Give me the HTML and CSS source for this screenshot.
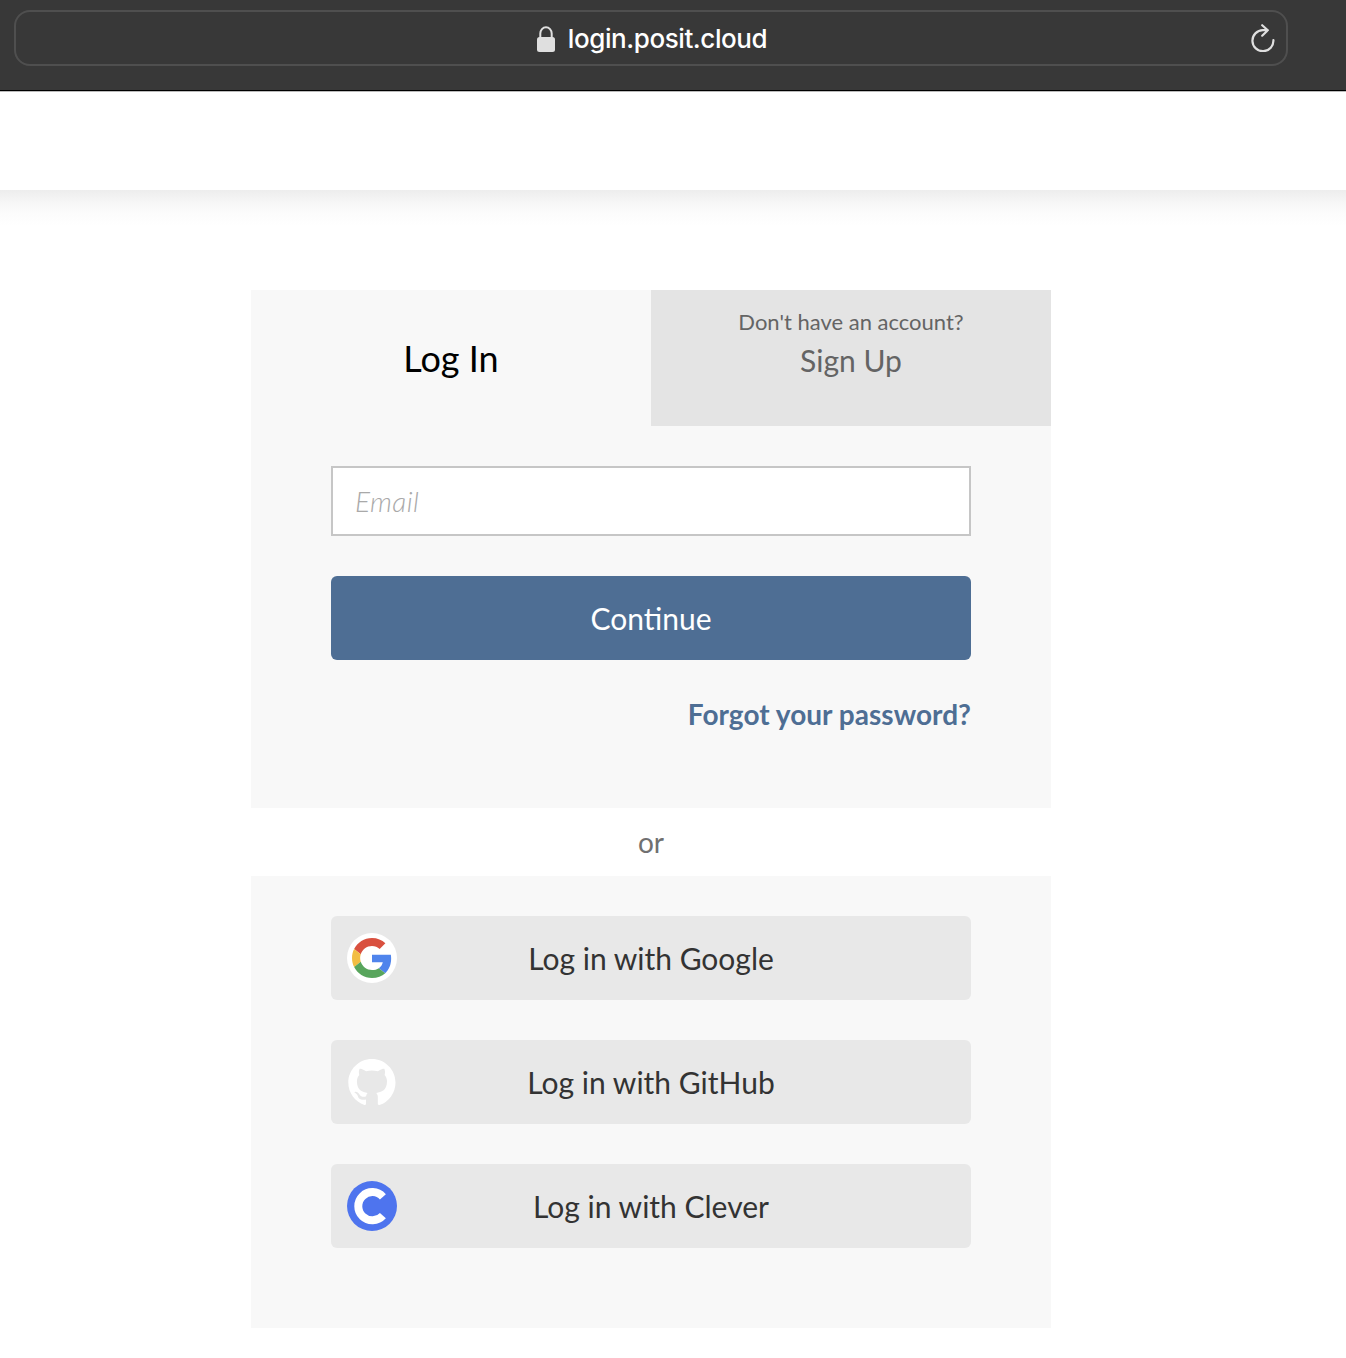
FILE: index.html
```html
<!DOCTYPE html>
<html lang="en">
<head>
<meta charset="utf-8">
<title>Log In</title>
<link rel="stylesheet" href="styles.css">
</head>
<body>
<div class="toolbar">
  <div class="address">
    <svg class="lock" width="18" height="26" viewBox="0 0 18 26"><path d="M3.3 12V7.5a5.7 6.2 0 0 1 11.4 0V12" fill="none" stroke="#dfdfdf" stroke-width="2"/><rect x="0" y="11" width="18" height="15" rx="2.5" fill="#dfdfdf"/></svg>
    <span class="url">login.posit.cloud</span>
    <svg class="reload" width="24" height="28" viewBox="0 0 24 28" fill="none" stroke="#dfdfdf" stroke-width="2.2" stroke-linecap="round" stroke-linejoin="round"><path d="M22.4 16A10.5 10.5 0 1 1 11.9 6.2H16.8M11.2 1.2l5.6 5.1-5.6 5.4"/></svg>
  </div>
</div>
<header class="header"></header>
<main class="main">
  <section class="panel">
    <nav class="tabs">
      <div class="tab tab-active">Log In</div>
      <div class="tab tab-other"><span class="hint">Don't have an account?</span><span class="signup">Sign Up</span></div>
    </nav>
    <form class="form">
      <input class="email" type="email" placeholder="Email">
      <button class="continue" type="button">Continue</button>
      <a class="forgot">Forgot your password?</a>
    </form>
  </section>
  <div class="or">or</div>
  <section class="panel providers">
    <button class="provider" type="button">
      <svg class="logo" viewBox="0 0 50 50"><circle cx="25" cy="25" r="25" fill="#fff"/><g transform="translate(5 5) scale(.8333)"><path fill="#D9503F" d="M24 9.5c3.54 0 6.71 1.22 9.21 3.6l6.85-6.85C35.9 2.38 30.47 0 24 0 14.62 0 6.51 5.38 2.56 13.22l7.98 6.19C12.43 13.72 17.74 9.5 24 9.5z"/><path fill="#4F84EC" d="M46.98 24.55c0-1.57-.15-3.09-.38-4.55H24v9.02h12.94c-.58 2.96-2.26 5.48-4.78 7.18l7.73 6c4.51-4.18 7.09-10.36 7.09-17.65z"/><path fill="#F2BD42" d="M10.53 28.59c-.48-1.45-.76-2.99-.76-4.59s.27-3.14.76-4.59l-7.98-6.19C.92 16.46 0 20.12 0 24c0 3.88.92 7.54 2.56 10.78l7.97-6.19z"/><path fill="#58A55C" d="M24 48c6.48 0 11.93-2.13 15.89-5.81l-7.73-6c-2.15 1.45-4.92 2.3-8.16 2.3-6.26 0-11.57-4.22-13.47-9.91l-7.98 6.19C6.51 42.62 14.62 48 24 48z"/></g></svg>
      Log in with Google
    </button>
    <button class="provider" type="button">
      <svg class="logo" viewBox="0 0 50 50"><path transform="translate(1.3 2) scale(2.95)" fill="#fff" fill-rule="evenodd" d="M8 0C3.58 0 0 3.58 0 8c0 3.54 2.29 6.53 5.47 7.59.4.07.55-.17.55-.38 0-.19-.01-.82-.01-1.49-2.01.37-2.53-.49-2.69-.94-.09-.23-.48-.94-.82-1.13-.28-.15-.68-.52-.01-.53.63-.01 1.08.58 1.23.82.72 1.21 1.87.87 2.33.66.07-.52.28-.87.51-1.07-1.78-.2-3.64-.89-3.64-3.95 0-.87.31-1.59.82-2.15-.08-.2-.36-1.02.08-2.12 0 0 .67-.21 2.2.82.64-.18 1.32-.27 2-.27s1.36.09 2 .27c1.53-1.04 2.2-.82 2.2-.82.44 1.1.16 1.92.08 2.12.51.56.82 1.27.82 2.15 0 3.07-1.87 3.75-3.65 3.95.29.25.54.73.54 1.48 0 1.07-.01 1.93-.01 2.2 0 .21.15.46.55.38A8.01 8.01 0 0 0 16 8c0-4.42-3.58-8-8-8z"/></svg>
      Log in with GitHub
    </button>
    <button class="provider" type="button">
      <svg class="logo" viewBox="0 0 50 50"><circle cx="25" cy="25" r="25" fill="#4E74EE"/><path fill="none" stroke="#fff" stroke-width="8" d="M35.9 15.8A14.1 14.1 0 1 0 35.9 34.6"/></svg>
      Log in with Clever
    </button>
  </section>
</main>
</body>
</html>
```
FILE: styles.css
```css
* { box-sizing: border-box; }
body { margin: 0; background: #fff; font-family: Lato, sans-serif; color: #000; }
.toolbar { height: 92px; padding: 10px 58px 0 14px; background: #383838; border-bottom: 1px solid #bbb; box-shadow: inset 0 -1px #000; }
.address { position: relative; height: 56px; border: 2px solid #4f4f4f; border-radius: 16px; display: flex; align-items: center; justify-content: center; gap: 13px; padding-left: 2px; color: #fff; font: 500 26px/52px Inter, sans-serif; }
.url { letter-spacing: -.42px; padding-top: 2px; }
.lock { margin-top: 2px; }
.reload { position: absolute; right: 11px; top: 12px; }
.header { height: 98px; }
.main { height: 1168px; padding: 100px 0 0 251px; background: linear-gradient(#ededed, #f6f6f6 12px, #fcfcfc 24px, #fff 36px); }
.panel { width: 800px; background: #f8f8f8; }
.tabs { display: flex; height: 136px; }
.tab { width: 400px; text-align: center; }
.tab-active { font-size: 36px; line-height: 136px; }
.tab-other { display: flex; flex-direction: column; background: #e4e4e4; color: #646464; padding-top: 16px; }
.hint { font-size: 22px; line-height: 32px; }
.signup { font-size: 30px; line-height: 44px; }
.form { height: 382px; padding: 40px 80px 0; display: flex; flex-direction: column; }
.email { height: 70px; border: 2px solid #c6c6c6; border-radius: 0; background: #fff; padding: 0 22px; font: 28px Lato, sans-serif; }
.email::placeholder { color: #a9a9a9; font-style: italic; font-weight: 300; letter-spacing: .45px; opacity: 1; }
.continue { height: 84px; margin-top: 40px; border: 0; border-radius: 6px; background: #4e6e94; color: #fff; font: 30px Lato, sans-serif; padding: 0; }
.forgot { align-self: flex-end; margin-top: 33px; color: #4e6e94; font-size: 28px; line-height: 42px; font-weight: 700; letter-spacing: .03px; }
.or { width: 800px; height: 68px; text-align: center; font-size: 28px; line-height: 68px; color: #707070; }
.providers { height: 452px; padding: 40px 80px 0; display: flex; flex-direction: column; gap: 40px; }
.provider { position: relative; height: 84px; border: 0; border-radius: 6px; background: #e8e8e8; color: #333; font: 30px Lato, sans-serif; padding: 0; }
.logo { position: absolute; left: 16px; top: 17px; width: 50px; height: 50px; }
```
